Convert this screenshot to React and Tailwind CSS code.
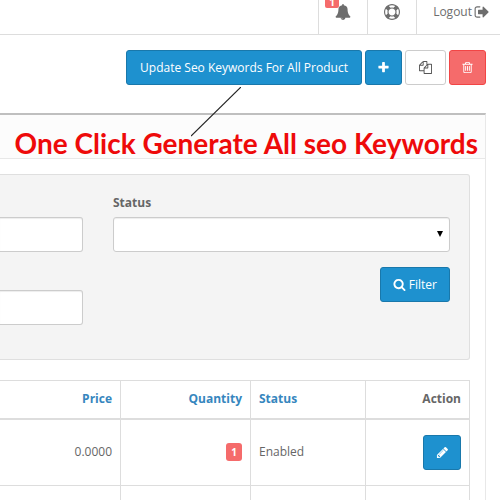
import React, { useState } from 'react';

// Font Awesome 4 glyphs on the 1792 grid
const ICONS = {
    bell: 'M912 1696q0-16-16-16-59 0-101.5-42.5t-42.5-101.5q0-16-16-16t-16 16q0 73 51.5 124.5t124.5 51.5q16 0 16-16zm816-288q0 52-38 90t-90 38h-448q0 106-75 181t-181 75-181-75-75-181h-448q-52 0-90-38t-38-90q50-42 91-88t85-119.5 74.5-158.5 50-206 19.5-260q0-152 117-282.5t307-158.5q-8-19-8-39 0-40 28-68t68-28 68 28 28 68q0 20-8 39 190 28 307 158.5t117 282.5q0 139 19.5 260t50 206 74.5 158.5 85 119.5 91 88z',
    lifeRing: 'M896 0q182 0 348 71t286 191 191 286 71 348-71 348-191 286-286 191-348 71-348-71-286-191-191-286-71-348 71-348 191-286 286-191 348-71zm0 128q-190 0-361 90l194 194q82-28 167-28t167 28l194-194q-171-90-361-90zm-678 1129l194-194q-28-82-28-167t28-167l-194-194q-90 171-90 361t90 361zm678 407q190 0 361-90l-194-194q-82 28-167 28t-167-28l-194 194q171 90 361 90zm0-384q159 0 271.5-112.5t112.5-271.5-112.5-271.5-271.5-112.5-271.5 112.5-112.5 271.5 112.5 271.5 271.5 112.5zm484-217l194 194q90-171 90-361t-90-361l-194 194q28 82 28 167t-28 167z',
    signOut: 'M704 1440q0 4 1 20t.5 26.5-3 23.5-10 19.5-20.5 6.5h-320q-119 0-203.5-84.5t-84.5-203.5v-704q0-119 84.5-203.5t203.5-84.5h320q13 0 22.5 9.5t9.5 22.5q0 4 1 20t.5 26.5-3 23.5-10 19.5-20.5 6.5h-320q-66 0-113 47t-47 113v704q0 66 47 113t113 47h312l11.5 1 11.5 3 8 5.5 7 9 2 13.5zm928-544q0 26-19 45l-544 544q-19 19-45 19t-45-19-19-45v-288h-448q-26 0-45-19t-19-45v-384q0-26 19-45t45-19h448v-288q0-26 19-45t45-19 45 19l544 544q19 19 19 45z',
    plus: 'M1600 736v192q0 40-28 68t-68 28h-416v416q0 40-28 68t-68 28h-192q-40 0-68-28t-28-68v-416h-416q-40 0-68-28t-28-68v-192q0-40 28-68t68-28h416v-416q0-40 28-68t68-28h192q40 0 68 28t28 68v416h416q40 0 68 28t28 68z',
    copy: 'M1696 384q40 0 68 28t28 68v1216q0 40-28 68t-68 28h-960q-40 0-68-28t-28-68v-288h-544q-40 0-68-28t-28-68v-672q0-40 20-88t48-76l408-408q28-28 76-48t88-20h416q40 0 68 28t28 68v328q68-40 128-40h416zm-544 213l-299 299h299v-299zm-640-384l-299 299h299v-299zm196 647l316-316v-416h-384v416q0 40-28 68t-68 28h-416v640h512v-256q0-40 20-88t48-76zm956 804v-1152h-384v416q0 40-28 68t-68 28h-416v640h896z',
    trash: 'M704 736v576q0 14-9 23t-23 9h-64q-14 0-23-9t-9-23v-576q0-14 9-23t23-9h64q14 0 23 9t9 23zm256 0v576q0 14-9 23t-23 9h-64q-14 0-23-9t-9-23v-576q0-14 9-23t23-9h64q14 0 23 9t9 23zm256 0v576q0 14-9 23t-23 9h-64q-14 0-23-9t-9-23v-576q0-14 9-23t23-9h64q14 0 23 9t9 23zm128 724v-948h-896v948q0 22 7 40.5t14.5 27 10.5 8.5h832q3 0 10.5-8.5t14.5-27 7-40.5zm-672-1076h448l-48-117q-7-9-17-11h-317q-10 2-17 11zm928 32v64q0 14-9 23t-23 9h-96v948q0 83-47 143.5t-113 60.5h-832q-66 0-113-58.5t-47-141.5v-952h-96q-14 0-23-9t-9-23v-64q0-14 9-23t23-9h309l70-167q15-37 54-63t79-26h320q40 0 79 26t54 63l70 167h309q14 0 23 9t9 23z',
    search: 'M1216 832q0-185-131.5-316.5t-316.5-131.5-316.5 131.5-131.5 316.5 131.5 316.5 316.5 131.5 316.5-131.5 131.5-316.5zm512 832q0 52-38 90t-90 38q-54 0-90-38l-343-342q-179 124-399 124-143 0-273.5-55.5t-225-150-150-225-55.5-273.5 55.5-273.5 150-225 225-150 273.5-55.5 273.5 55.5 225 150 150 225 55.5 273.5q0 220-124 399l343 343q37 37 37 90z',
    pencil: 'M491 1536l91-91-235-235-91 91v107h128v128h107zm523-928q0-22-22-22-10 0-17 7l-542 542q-7 7-7 17 0 22 22 22 10 0 17-7l542-542q7-7 7-17zm-54-192l416 416-832 832h-416v-416zm683 96q0 53-37 90l-166 166-416-416 166-165q36-38 90-38 53 0 91 38l235 234q37 39 37 91z',
};

function Icon({ name, className = 'size-[13px]' }) {
    return (
        <svg viewBox="0 0 1792 1792" fill="currentColor" aria-hidden="true" className={`shrink-0 ${className}`}>
            <path d={ICONS[name]} />
        </svg>
    );
}

const BUTTON_STYLES = {
    primary: 'bg-[#1e91cf] border-[#1978ab] text-white',
    default: 'bg-white border-[#cccccc] text-[#555555]',
    danger: 'bg-[#f56b6b] border-[#f24545] text-white',
};

function Button({ variant = 'primary', className = 'px-3', children, ...props }) {
    return (
        <button
            type="button"
            className={`inline-flex h-[35px] items-center justify-center gap-[3px] rounded-[3px] border ${BUTTON_STYLES[variant]} ${className}`}
            {...props}
        >
            {children}
        </button>
    );
}

const fieldClass = 'block h-[35px] w-full rounded-[3px] border border-[#cccccc] bg-white px-3 shadow-[inset_0_1px_1px_rgba(0,0,0,0.075)]';

const products = [
    { id: 1, price: '0.0000', quantity: 1, status: 'Enabled' },
    { id: 2, price: '', quantity: null, status: '' },
];

function TopBar() {
    return (
        <header className="flex h-[35px] justify-end border-b border-[#dddddd] text-[#6d6d6d]">
            <a href="#alerts" aria-label="Alerts" className="relative flex w-[49px] justify-center border-l border-[#dddddd] pt-1">
                <Icon name="bell" className="size-4" />
                <span className="absolute -top-1 left-[6px] rounded-[2px] bg-[#f56b6b] px-1 text-[10px] leading-3 font-bold text-white">1</span>
            </a>
            <a href="#help" aria-label="Help" className="flex w-[49px] justify-center border-l border-[#dddddd] pt-1">
                <Icon name="lifeRing" className="size-4" />
            </a>
            <a href="#logout" className="flex gap-[2px] border-l border-[#dddddd] pt-1 pr-[10px] pl-4 leading-4">
                Logout
                <Icon name="signOut" className="size-4" />
            </a>
        </header>
    );
}

function FilterForm() {
    const [status, setStatus] = useState('');

    return (
        <form className="grid grid-cols-[83fr_337fr] gap-[30px] rounded-r-[3px] border border-l-0 border-[#dfdfdf] bg-[#f4f4f4] pt-[19px] pr-[19px] pb-[34px]">
            <div className="flex flex-col gap-[38px] pt-[23px]">
                <input type="text" aria-label="Product name" className={`${fieldClass} rounded-l-none border-l-0`} />
                <input type="text" aria-label="Model" className={`${fieldClass} rounded-l-none border-l-0`} />
            </div>
            <div>
                <label htmlFor="input-status" className="mb-[5px] block leading-[18px] font-bold">Status</label>
                <div className="relative">
                    <select
                        id="input-status"
                        value={status}
                        onChange={(e) => setStatus(e.target.value)}
                        className={`${fieldClass} appearance-none`}
                    >
                        <option value=""></option>
                        <option value="1">Enabled</option>
                        <option value="0">Disabled</option>
                    </select>
                    <svg viewBox="0 0 6 6" className="pointer-events-none absolute top-[14px] right-[7px] size-[6px] fill-black" aria-hidden="true">
                        <path d="M0 0h6L3 6z" />
                    </svg>
                </div>
                <div className="mt-[15px] flex justify-end">
                    <Button>
                        <Icon name="search" />
                        Filter
                    </Button>
                </div>
            </div>
        </form>
    );
}

function ProductTable() {
    return (
        <table className="w-full table-fixed border-collapse border-t border-r border-[#dddddd]">
            <colgroup>
                <col />
                <col className="w-[130px]" />
                <col className="w-[115px]" />
                <col className="w-[104px]" />
            </colgroup>
            <thead>
                <tr className="h-[38px] border-b-2 border-[#dddddd]">
                    <th className="border-r border-[#dddddd] px-2 text-right"><a href="#price" className="text-[#3686be]">Price</a></th>
                    <th className="border-r border-[#dddddd] px-2 text-right"><a href="#quantity" className="text-[#3686be]">Quantity</a></th>
                    <th className="border-r border-[#dddddd] px-2 text-left"><a href="#status" className="text-[#3686be]">Status</a></th>
                    <th className="px-2 text-right">Action</th>
                </tr>
            </thead>
            <tbody>
                {products.map((product) => (
                    <tr key={product.id} className="h-[67px] border-b border-[#dddddd]">
                        <td className="border-r border-[#dddddd] px-2 text-right">{product.price}</td>
                        <td className="border-r border-[#dddddd] px-2 text-right">
                            {product.quantity !== null && (
                                <span className="inline-block rounded-[3px] bg-[#f56b6b] px-[5px] text-[10px] leading-[18px] font-bold text-white">{product.quantity}</span>
                            )}
                        </td>
                        <td className="border-r border-[#dddddd] px-2">{product.status}</td>
                        <td className="px-2 text-right">
                            <Button aria-label="Edit" className="w-[38px] align-middle">
                                <Icon name="pencil" />
                            </Button>
                        </td>
                    </tr>
                ))}
            </tbody>
        </table>
    );
}

export default function App() {
    return (
        <div className="h-screen overflow-hidden bg-white font-['Open_Sans',sans-serif] text-[12px] leading-[18px] text-[#666666]">
            <TopBar />

            <main className="pr-[14px]">
                <div className="flex justify-end gap-[3px] py-[15px]">
                    <Button className="w-[236px] whitespace-nowrap">Update Seo Keywords For All Product</Button>
                    <Button aria-label="Add new" className="w-[37px]"><Icon name="plus" /></Button>
                    <Button variant="default" aria-label="Copy" className="w-[41px]"><Icon name="copy" /></Button>
                    <Button variant="danger" aria-label="Delete" className="w-[37px]"><Icon name="trash" /></Button>
                </div>

                <section className="mt-[13px] border-t-2 border-r border-t-[#bfbfbf] border-r-[#e8e8e8]">
                    <div className="relative flex h-11 items-center justify-end border-b border-[#e8e8e8] bg-[#fcfcfc] pt-3 pr-[7px]">
                        <h1 className="font-['Lato',sans-serif] text-[28px] leading-7 font-bold whitespace-nowrap text-[#ee0a0a]">
                            One Click Generate All seo Keywords
                        </h1>
                        {/* pointer from the caption up to the update button */}
                        <svg viewBox="0 0 50 50" className="absolute -top-[28px] right-[244px] size-[50px]" aria-hidden="true">
                            <path d="M50 0L0 49" stroke="#222222" strokeWidth="1.2" />
                        </svg>
                    </div>

                    <div className="pt-[15px] pr-[15px]">
                        <FilterForm />
                        <div className="pt-5">
                            <ProductTable />
                        </div>
                    </div>
                </section>
            </main>
        </div>
    );
}
